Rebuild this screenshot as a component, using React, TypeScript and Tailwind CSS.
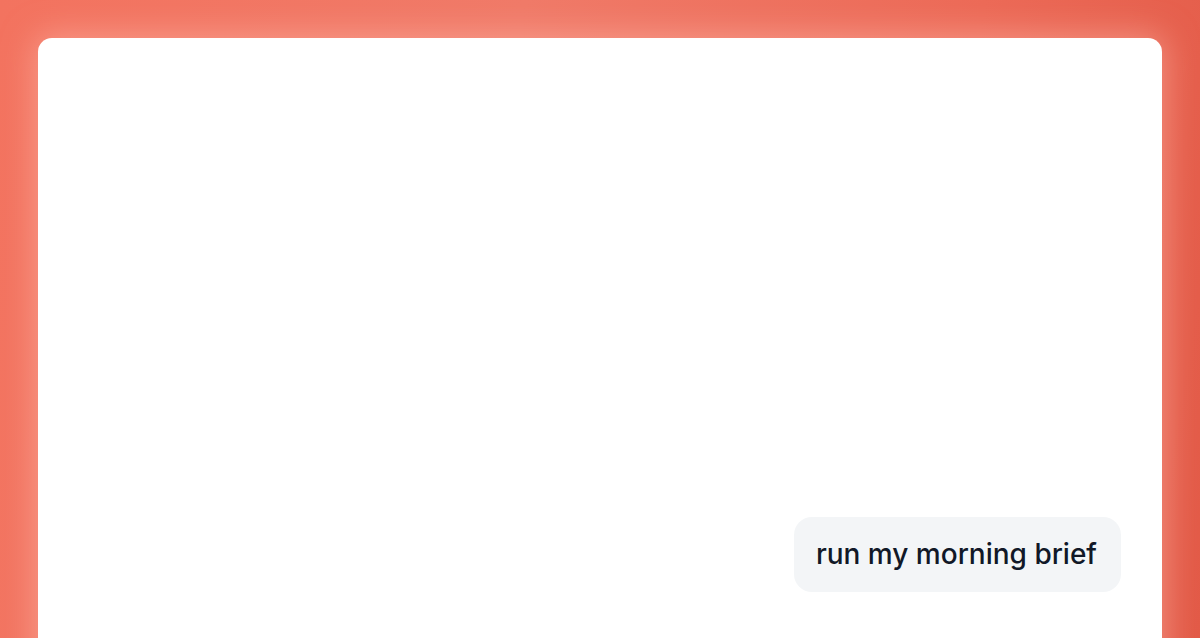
export default function App() {
  return (
    <div
      className="h-[638px] w-full overflow-hidden bg-[linear-gradient(100deg,#f3735f_0%,#f07a68_40%,#ec6a57_75%,#e25a47_100%)] px-[38px] pt-[38px]"
      style={{ fontFamily: "Inter, 'Noto Sans', sans-serif" }}
    >
      <div className="flex h-[640px] flex-col items-end justify-end rounded-[14px] bg-white pb-[86px] pr-[41px] shadow-[0_0_32px_4px_rgba(255,190,175,0.5)]">
        <div className="rounded-[18px] bg-[#f3f5f7] pl-[22px] pr-[24px] py-[20px] text-[28px] font-medium leading-[35px] text-[#111827]">
          run my morning brief
        </div>
      </div>
    </div>
  );
}
